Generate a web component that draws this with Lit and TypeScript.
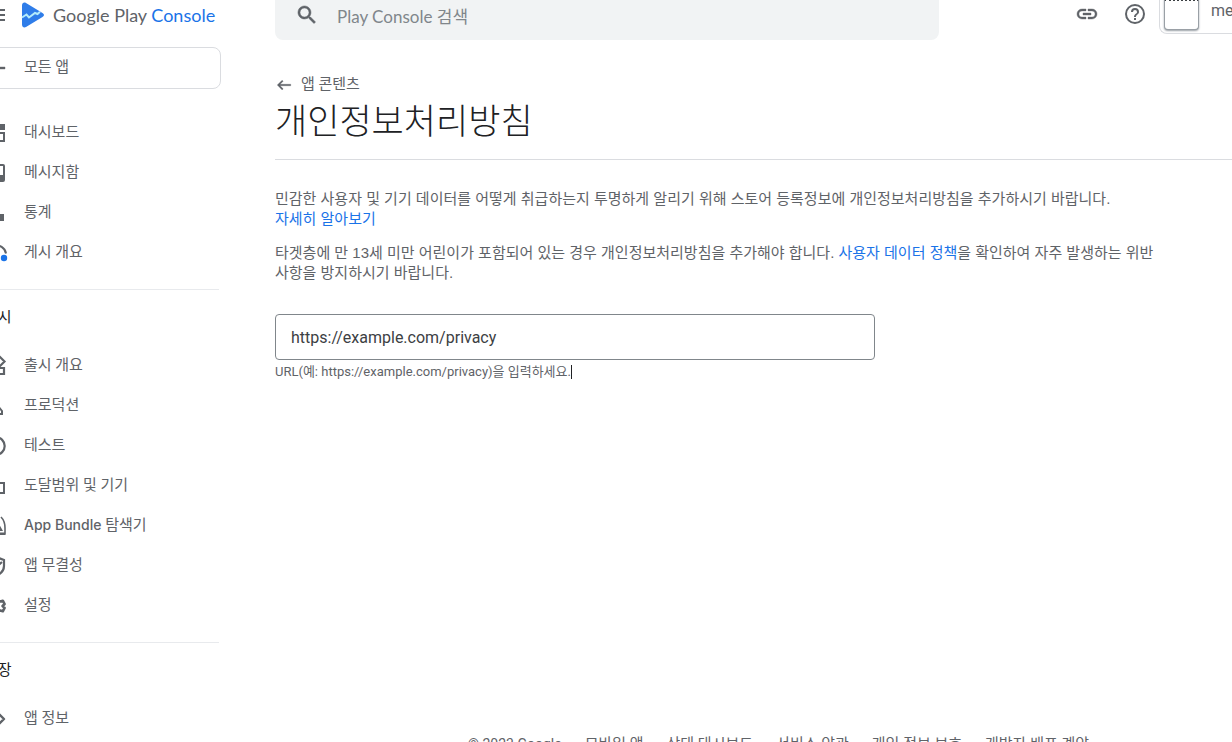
import { LitElement, html, svg, css, nothing } from "lit";
import { customElement, property } from "lit/decorators.js";

const icons: Record<string, unknown> = {
  menu: svg`<path d="M3 6h18v2H3zM3 11h18v2H3zM3 16h18v2H3z"/>`,
  back: svg`<path d="M21 11v2H6.800l4.100 4.100L9.500 18.500 3 12l6.500-6.500 1.400 1.400L6.800 11z" stroke="currentColor" stroke-width=".4"/>`,
  dashboard: svg`<path d="M3 3h8v10H3zM13 3h8v6h-8zM3 15h8v6H3z"/><path fill-rule="evenodd" d="M13 11h8v10h-8zm2 2v6h4v-6z"/>`,
  inbox: svg`<path fill-rule="evenodd" d="M5 3h14a2 2 0 0 1 2 2v14a2 2 0 0 1-2 2H5a2 2 0 0 1-2-2V5c0-1.100.9-2 2-2zm0 2v9h4a3 3 0 0 0 6 0h4V5z"/>`,
  stats: svg`<path d="M4 9h4v11H4zM10 4h4v16h-4zM15 13h5v7h-5z"/>`,
  publish: svg`<path fill="none" stroke="currentColor" stroke-width="2" d="M4 18a9.500 9.500 0 1 1 18-5.500M10 16a5 5 0 0 1 5-5"/><circle cx="20" cy="17" r="3.200" fill="#1a73e8"/>`,
  releases: svg`<path fill="none" stroke="currentColor" stroke-width="2.200" d="M4 4h6v6H4zM4 14h6v6H4zM14 14h6v6h-6zM16 3l4.500 4.500L16 12l-4.500-4.500z"/>`,
  production: svg`<path fill="none" stroke="currentColor" stroke-width="2" d="M12 3c-3 3-4 7-3 13h5c1-6 0-10-2-13zM8 12l-3 4v5l4-3M14 12l4 5v3h-4"/>`,
  test: svg`<circle cx="12" cy="12" r="8.700" fill="none" stroke="currentColor" stroke-width="2.200"/><circle cx="12" cy="12" r="3"/>`,
  devices: svg`<path fill="none" stroke="currentColor" stroke-width="2" d="M15 4H4v13h8"/><path fill="none" stroke="currentColor" stroke-width="2" d="M14 9h6v10h-6z"/>`,
  bundle: svg`<path fill="none" stroke="currentColor" stroke-width="1.600" d="M17 3c3 3 4 7 4 11v6H3v-6c0-4 1-8 4-11"/><path d="M3 18.500h18V21H3zM12 5l7 12H5z"/>`,
  shield: svg`<path fill="none" stroke="currentColor" stroke-width="2.200" d="M12 3l8 3v6c0 4.500-3.500 8-8 9.500C7.500 20 4 16.500 4 12V6z"/><path fill="none" stroke="currentColor" stroke-width="2.200" d="M8 11l3 3 7-6"/>`,
  settings: svg`<path fill="none" stroke="currentColor" stroke-width="2.600" stroke-linejoin="round" d="M10 4h4l.6 2.600 1.600.9 2.600-.8 1.800 3.300-2 2 2 2-1.800 3.300-2.600-.8-1.600.9L14 20h-4l-.6-2.600-1.600-.9-2.600.8L3.400 14l2-2-2-2 1.800-3.300 2.600.8 1.600-.9z"/><circle cx="12" cy="12" r="3"/>`,
  store: svg`<path fill="none" stroke="currentColor" stroke-width="2.400" stroke-linejoin="round" d="M3 7.500h12.500L20 12l-4.500 4.500H3z"/>`,
  search: svg`<path d="M15.500 14h-.8l-.3-.3A6.500 6.500 0 1 0 13.700 14.400l.3.300v.8l5 5 1.500-1.500zm-6 0a4.500 4.500 0 1 1 0-9 4.500 4.500 0 0 1 0 9z" stroke="currentColor" stroke-width=".5"/>`,
  link: svg`<path d="M3.900 12A3.100 3.100 0 0 1 7 8.900h4V7H7a5 5 0 0 0 0 10h4v-1.900H7A3.100 3.100 0 0 1 3.900 12zM8 13h8v-2H8zm9-6h-4v1.900h4a3.100 3.100 0 0 1 0 6.200h-4V17h4a5 5 0 0 0 0-10z" stroke="currentColor" stroke-width=".4"/>`,
  help: svg`<path d="M11 18h2v-2h-2zm1-16a10 10 0 1 0 0 20 10 10 0 0 0 0-20zm0 18a8 8 0 1 1 0-16 8 8 0 0 1 0 16zm0-14a4 4 0 0 0-4 4h2a2 2 0 1 1 4 0c0 2-3 1.750-3 5h2c0-2.250 3-2.500 3-5a4 4 0 0 0-4-4z"/>`,
};

const shared = css`
  * { box-sizing: border-box; }
  a { color: inherit; text-decoration: none; }
  button { border: 0; padding: 0; background: none; color: inherit; font: inherit; cursor: pointer; display: flex; }
`;

@customElement("ui-icon")
class UiIcon extends LitElement {
  static styles = css`
    :host { display: block; flex: none; width: 24px; height: 24px; }
    svg { display: block; width: 100%; height: 100%; fill: currentColor; }
  `;
  @property() name = "";
  render() {
    return html`<svg viewBox="0 0 24 24" aria-hidden="true">${icons[this.name] ?? nothing}</svg>`;
  }
}

interface Item { icon: string; label: string; latin?: string; }
interface Section { title?: string; items: Item[]; }

const sections: Section[] = [
  { items: [
    { icon: "dashboard", label: "대시보드" },
    { icon: "inbox", label: "메시지함" },
    { icon: "stats", label: "통계" },
    { icon: "publish", label: "게시 개요" },
  ] },
  { title: "출시", items: [
    { icon: "releases", label: "출시 개요" },
    { icon: "production", label: "프로덕션" },
    { icon: "test", label: "테스트" },
    { icon: "devices", label: "도달범위 및 기기" },
    { icon: "bundle", latin: "App Bundle", label: "탐색기" },
    { icon: "shield", label: "앱 무결성" },
    { icon: "settings", label: "설정" },
  ] },
  { title: "성장", items: [{ icon: "store", label: "앱 정보" }] },
];

@customElement("side-nav")
class SideNav extends LitElement {
  static styles = [shared, css`
    :host { display: block; }
    .brand { display: flex; align-items: center; height: 30px; }
    .logo { width: 24px; height: 26px; margin: 0 8px 0 13px; flex: none; }
    .wordmark { font: 18px/24px Lato, sans-serif; white-space: nowrap; }
    .console { color: #1a73e8; }
    .all { display: flex; align-items: center; gap: 16px; height: 42px; margin: 17px 0 23px -8px; padding-left: 7px; border: 1px solid #dadce0; border-radius: 8px; }
    .all-label { padding-bottom: 2px; }
    .section { margin-right: 2px; }
    .section + .section { border-top: 1px solid #e8eaed; margin-top: 17px; padding-top: 7px; }
    .title { margin: 0; font-size: 15px; line-height: 40px; font-weight: 400; color: #202124; }
    .list { list-style: none; margin: 0; padding: 0; }
    .title + .list { padding-top: 8px; }
    .item { display: flex; align-items: center; gap: 16px; height: 40px; padding-top: 2px; white-space: nowrap; }
    .label { padding-bottom: 2px; }
    .latin { font: 500 14px Inter, sans-serif; }
  `];
  render() {
    return html`
      <div class="brand">
        <button aria-label="메뉴"><ui-icon name="menu"></ui-icon></button>
        <svg class="logo" viewBox="0 0 24 26" aria-hidden="true">
          <path fill="#2f7de9" d="M1 3.500C1 1 3 0 5 1l16.500 10c2 1.200 2 2.800 0 4L5 25c-2 1-4 0-4-2.500z"/>
          <path fill="none" stroke="#b4ecfb" stroke-width="2" d="M1 15.500l4.500-3 2.500 3 6-4.500 2.500 1L19 9.800"/>
        </svg>
        <span class="wordmark">Google Play <span class="console">Console</span></span>
      </div>
      <a class="all" href="#apps"><ui-icon name="back"></ui-icon><span class="all-label">모든 앱</span></a>
      <nav>
        ${sections.map((s) => html`
          <section class="section">
            ${s.title ? html`<h2 class="title">${s.title}</h2>` : nothing}
            <ul class="list">
              ${s.items.map((i) => html`<li><a class="item" href="#${i.icon}">
                <ui-icon name=${i.icon}></ui-icon>
                <span class="label">${i.latin ? html`<span class="latin">${i.latin}</span> ` : nothing}${i.label}</span>
              </a></li>`)}
            </ul>
          </section>`)}
      </nav>`;
  }
}

@customElement("top-bar")
class TopBar extends LitElement {
  static styles = [shared, css`
    :host { display: flex; align-items: flex-start; height: 48px; }
    .search { display: flex; align-items: center; gap: 18px; flex: 0 1 664px; height: 48px; padding: 2px 20px 0; background: #f1f3f4; border-radius: 8px; }
    .search ui-icon { margin-bottom: 4px; }
    .query { flex: 1; min-width: 0; border: 0; padding: 0; outline: 0; background: none; font: 17px/24px Lato, "Noto Sans CJK KR", sans-serif; color: #3c4043; }
    .query::placeholder { color: #80868b; opacity: 1; }
    .tools { display: flex; align-items: center; gap: 24px; margin-left: auto; height: 44px; }
    .account { display: flex; align-items: center; gap: 12px; width: 73px; height: 42px; margin-left: 12px; padding-left: 4px; border: 1px solid #dadce0; border-right: 0; border-radius: 0 0 0 8px; white-space: nowrap; overflow: hidden; font-size: 16px; }
    .thumb { flex: none; width: 35px; height: 31px; margin-top: 2px; background: #fff; border: 1px solid #9aa0a6; border-top: 2px dotted #3c4043; border-radius: 0 0 4px 4px; box-shadow: 0 1px 2px #9aa0a6; }
    .name { padding-bottom: 4px; }
  `];
  render() {
    return html`
      <label class="search">
        <ui-icon name="search"></ui-icon>
        <input class="query" type="search" placeholder="Play Console 검색" aria-label="Play Console 검색" />
      </label>
      <div class="tools">
        <button aria-label="링크"><ui-icon name="link"></ui-icon></button>
        <button aria-label="도움말"><ui-icon name="help"></ui-icon></button>
      </div>
      <button class="account"><span class="thumb"></span><span class="name">me</span></button>`;
  }
}

@customElement("app-root")
class AppRoot extends LitElement {
  static styles = [shared, css`
    :host { display: grid; grid-template-columns: 237px minmax(0, 1fr); column-gap: 54px; height: 100vh; overflow: hidden; margin-left: -16px; background: #fff; color: #5f6368; font: 15px/20px Roboto, "Noto Sans CJK KR", sans-serif; }
    .page { display: flex; flex-direction: column; min-width: 0; height: 100vh; }
    top-bar { margin-top: -8px; flex: none; }
    .crumb { display: flex; align-items: center; gap: 8px; margin-top: 34px; align-self: flex-start; }
    .crumb ui-icon { width: 18px; height: 18px; margin-top: 2px; }
    .heading { margin: 0; padding: 5px 0 12px; border-bottom: 1px solid #dadce0; font-size: 35px; line-height: 48px; font-weight: 300; color: #202124; }
    .copy { max-width: 900px; margin-top: 29px; font-family: "Liberation Sans", "Noto Sans CJK KR", sans-serif; word-break: keep-all; }
    .text { margin: 0 0 14px; }
    .link { color: #1a73e8; }
    .field { max-width: 600px; margin-top: 31px; }
    .url { display: block; width: 100%; height: 46px; padding: 0 15px; border: 1px solid #80868b; border-radius: 4px; outline: 0; background: #fff; color: #3c4043; font: 16px/24px Roboto, "Noto Sans CJK KR", sans-serif; }
    .hint { display: flex; align-items: center; font-size: 13px; line-height: 24px; }
    .caret { width: 1px; height: 14px; background: #202124; }
    .footer { display: flex; gap: 23px; margin: auto 0 -12px 193px; white-space: nowrap; }
    .legal { font-size: 14px; }
  `];
  render() {
    return html`
      <side-nav></side-nav>
      <div class="page">
        <top-bar></top-bar>
        <main>
          <a class="crumb" href="#content"><ui-icon name="back"></ui-icon><span>앱 콘텐츠</span></a>
          <h1 class="heading">개인정보처리방침</h1>
          <div class="copy">
            <p class="text">민감한 사용자 및 기기 데이터를 어떻게 취급하는지 투명하게 알리기 위해 스토어 등록정보에 개인정보처리방침을 추가하시기 바랍니다. <a class="link" href="#more">자세히&nbsp;알아보기</a></p>
            <p class="text">타겟층에 만 13세 미만 어린이가 포함되어 있는 경우 개인정보처리방침을 추가해야 합니다. <a class="link" href="#policy">사용자 데이터 정책</a>을 확인하여 자주 발생하는 위반 사항을 방지하시기 바랍니다.</p>
          </div>
          <div class="field">
            <input class="url" type="url" value="https://example.com/privacy" aria-label="개인정보처리방침 URL" aria-describedby="hint" />
            <div class="hint"><span id="hint">URL(예: https://example.com/privacy)을 입력하세요.</span><span class="caret"></span></div>
          </div>
        </main>
        <footer class="footer">
          <span class="legal">© 2023 Google</span>
          ${["모바일 앱", "상태 대시보드", "서비스 약관", "개인 정보 보호", "개발자 배포 계약"].map((t) => html`<a href="#footer">${t}</a>`)}
        </footer>
      </div>`;
  }
}
